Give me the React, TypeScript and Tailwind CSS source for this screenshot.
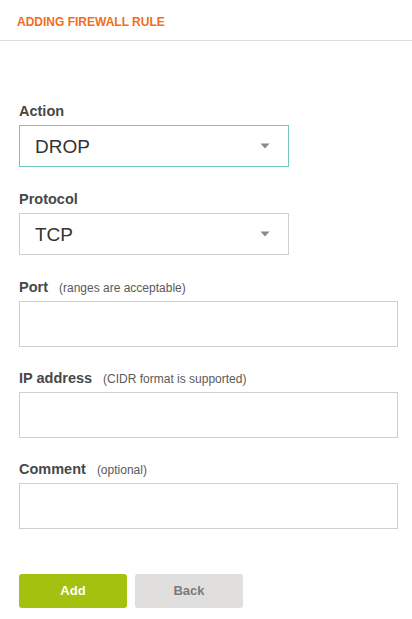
import React from "react";

const font = { fontFamily: '"Liberation Sans", Arial, sans-serif' };

function Arrow() {
  return (
    <svg width="10" height="6" viewBox="0 0 10 6" className="shrink-0">
      <path d="M0.5 0.5 L9.5 0.5 L5 5.5 Z" fill="#8a8a8a" />
    </svg>
  );
}

function Select({ value, active }: { value: string; active?: boolean }) {
  return (
    <div
      className={`flex h-[42px] w-[270px] items-center justify-between border pl-[15px] pr-[18px] ${
        active ? "border-[#72c6c0]" : "border-[#cfcfcf]"
      }`}
    >
      <span className="text-[19px] leading-none text-[#333]">{value}</span>
      <Arrow />
    </div>
  );
}

function Label({ title, hint }: { title: string; hint?: string }) {
  return (
    <div className="mb-[5px] flex h-[18px] items-baseline leading-[18px]">
      <span className="text-[14.5px] font-bold text-[#484848]">{title}</span>
      {hint && <span className="ml-[11px] text-[12px] text-[#5a5a5a]">{hint}</span>}
    </div>
  );
}

function Input() {
  return <div className="h-[46px] w-[379px] border border-[#cfcfcf] bg-white" />;
}

export default function App() {
  return (
    <div className="min-h-[619px] w-[412px] bg-white" style={font}>
      <div className="h-[41px] border-b border-[#dedede] pl-[17px] pt-[9px]">
        <span className="text-[12px] font-bold leading-[16px] text-[#f26d22]">ADDING FIREWALL RULE</span>
      </div>
      <div className="px-[19px] pt-[61px]">
        <Label title="Action" />
        <Select value="DROP" active />
        <div className="h-[23px]" />
        <Label title="Protocol" />
        <Select value="TCP" />
        <div className="h-[23px]" />
        <Label title="Port" hint="(ranges are acceptable)" />
        <Input />
        <div className="h-[22px]" />
        <Label title="IP address" hint="(CIDR format is supported)" />
        <Input />
        <div className="h-[22px]" />
        <Label title="Comment" hint="(optional)" />
        <Input />
        <div className="mt-[45px] flex gap-[8px]">
          <button className="h-[34px] w-[108px] rounded-[3px] bg-[#a4c10f] text-[13px] font-bold text-white">
            Add
          </button>
          <button className="h-[34px] w-[108px] rounded-[3px] bg-[#e0dfde] text-[13px] font-bold text-[#7a7a7a]">
            Back
          </button>
        </div>
      </div>
    </div>
  );
}
